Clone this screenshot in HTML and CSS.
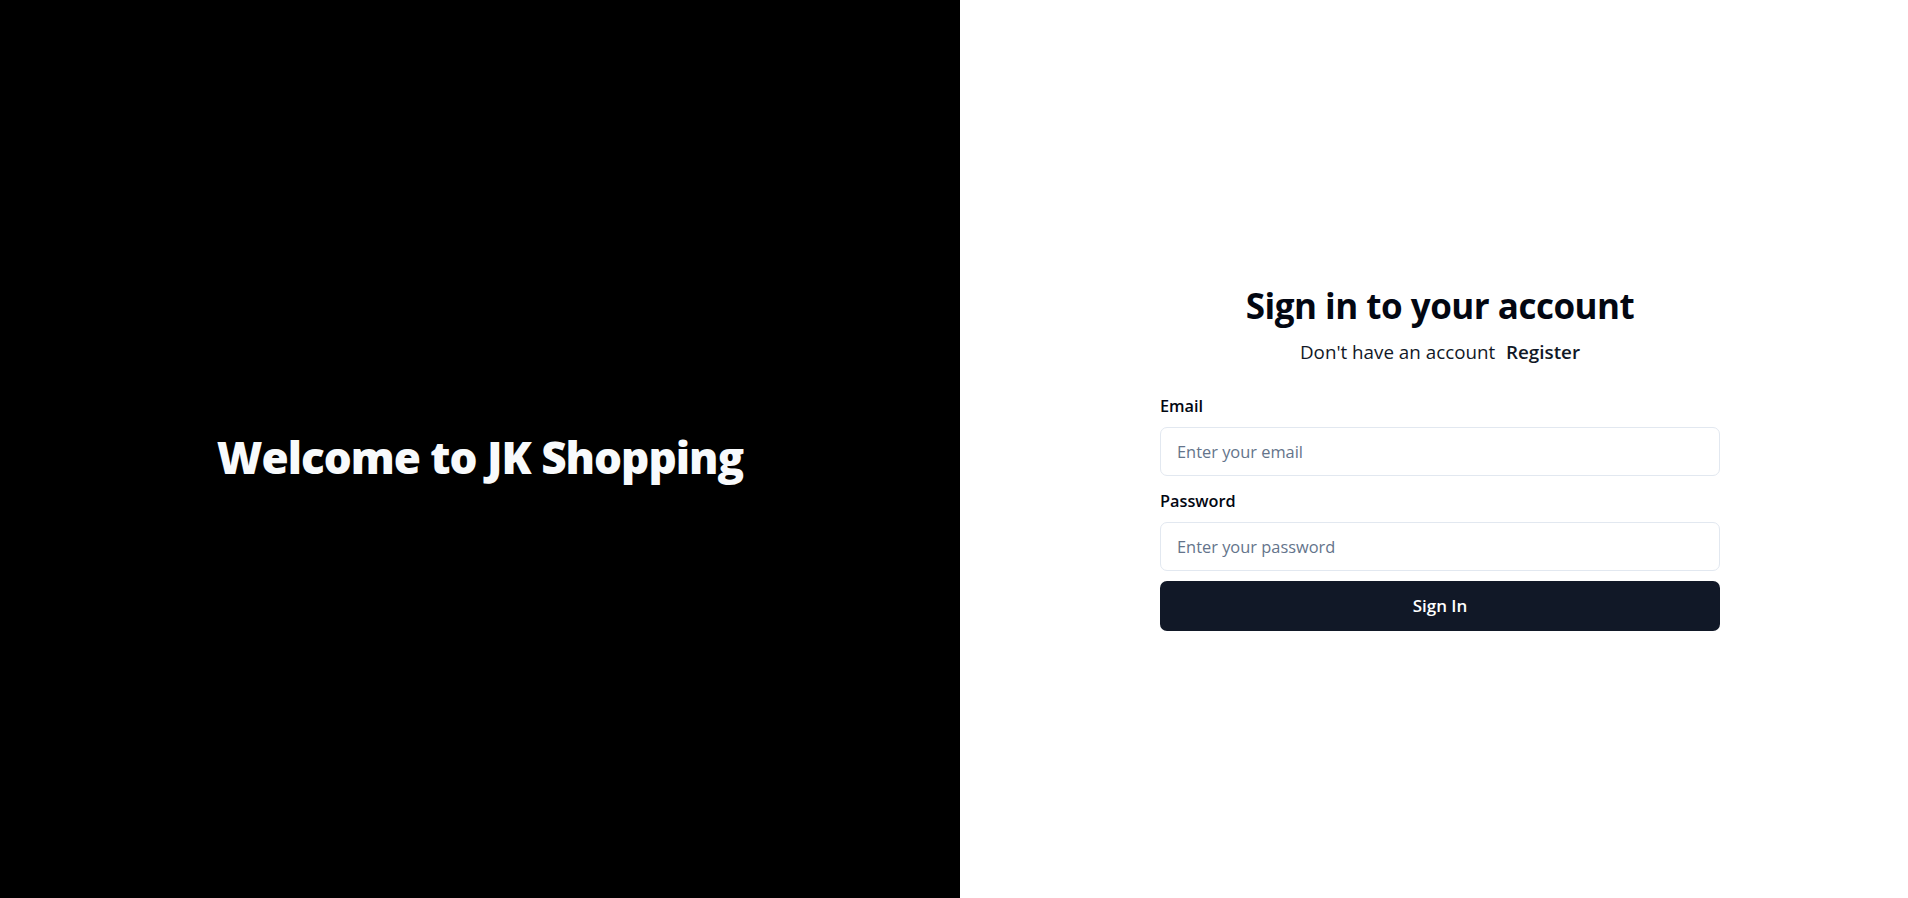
FILE: index.html
```html
<!DOCTYPE html>
<html lang="en">
<head>
<meta charset="utf-8">
<title>JK Shopping – Sign in</title>
<link rel="stylesheet" href="styles.css">
</head>
<body>
<main class="page">
  <section class="hero">
    <h1 class="hero-title">Welcome to JK Shopping</h1>
  </section>
  <section class="auth">
    <div class="card">
      <h2 class="card-title">Sign in to your account</h2>
      <p class="card-sub">Don't have an account <a class="link" href="#">Register</a></p>
      <form class="form">
        <label class="label" for="email">Email</label>
        <input class="input" id="email" type="email" placeholder="Enter your email">
        <label class="label label-next" for="password">Password</label>
        <input class="input" id="password" type="password" placeholder="Enter your password">
        <button class="button" type="button">Sign In</button>
      </form>
    </div>
  </section>
</main>
</body>
</html>
```

FILE: styles.css
```css
* { box-sizing: border-box; }
html, body { margin: 0; padding: 0; }
body {
  font-family: "Open Sans", "Noto Sans", sans-serif;
  background: #ffffff;
  overflow: hidden;
}
.page {
  display: flex;
  height: 913px;
}
.hero {
  flex: none;
  width: 960px;
  background: #000000;
  display: flex;
  align-items: center;
  justify-content: center;
}
.hero-title {
  margin: 0;
  color: #f8fafc;
  font-size: 44px;
  line-height: 50px;
  font-weight: 800;
  letter-spacing: -1px;
}
.auth {
  flex: none;
  width: 960px;
  display: flex;
  align-items: center;
  justify-content: center;
}
.card {
  width: 560px;
}
.card-title {
  margin: 0;
  text-align: center;
  font-size: 35px;
  line-height: 45px;
  font-weight: 700;
  letter-spacing: -0.5px;
  color: #030712;
}
.card-sub {
  margin: 10px 0 0;
  text-align: center;
  font-size: 18.8px;
  line-height: 28px;
  color: #111827;
}
.link {
  margin-left: 6px;
  color: #111827;
  font-weight: 600;
  text-decoration: none;
}
.form {
  margin-top: 28px;
  display: flex;
  flex-direction: column;
  gap: 10px;
}
.label {
  padding-top: 2px;
  font-size: 16.3px;
  line-height: 21px;
  font-weight: 600;
  color: #030712;
}
.label-next { margin-top: 3px; }
.input {
  height: 49px;
  width: 100%;
  border: 1px solid #e2e8f0;
  border-radius: 7px;
  padding: 0 16px;
  font-family: inherit;
  font-size: 16.4px;
  color: #0f172a;
  background: #ffffff;
  outline: none;
}
.input::placeholder { color: #64748b; }
.button {
  height: 50px;
  width: 100%;
  border: none;
  border-radius: 7px;
  background: #111827;
  color: #ffffff;
  font-family: inherit;
  font-size: 17px;
  font-weight: 600;
  cursor: pointer;
}
```
